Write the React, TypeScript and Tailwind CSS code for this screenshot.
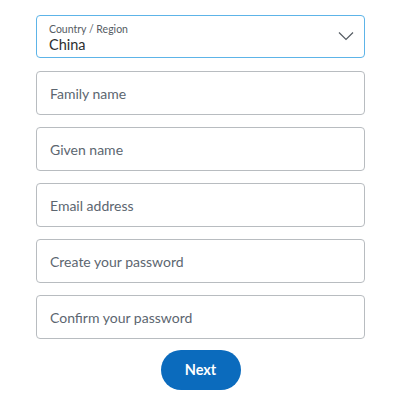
import React from "react";

const fields = [
  "Family name",
  "Given name",
  "Email address",
  "Create your password",
  "Confirm your password",
];

export default function App() {
  return (
    <div
      className="w-[406px] h-[400px] bg-white"
      style={{ fontFamily: "Lato, 'Noto Sans', sans-serif" }}
    >
      <div className="ml-[36px] w-[329px] pt-[15px] flex flex-col">
        {/* Country select */}
        <div className="relative h-[43px] rounded-[4px] border-[1.5px] border-[#5db4e8] px-[12px] pt-[6px]">
          <div className="text-[10.5px] leading-[14px] text-[#555c63]">
            Country / Region
          </div>
          <div className="text-[14.5px] leading-[18px] text-[#2c2e2f]">China</div>
          <svg
            className="absolute right-[10px] top-[15px]"
            width="16"
            height="10"
            viewBox="0 0 16 10"
            fill="none"
            stroke="#555c63"
            strokeWidth="1.2"
          >
            <path d="M1 1.5l7 7 7-7" />
          </svg>
        </div>

        <div className="mt-[13px] flex flex-col gap-[12px]">
          {fields.map((f) => (
            <div
              key={f}
              className="h-[44px] rounded-[4px] border border-[#b8bcc0] px-[13px] flex items-center text-[14px] text-[#5c6670]"
            >
              {f}
            </div>
          ))}
        </div>

        <div className="mt-[11px] flex justify-center">
          <button className="w-[80px] h-[40px] rounded-full bg-[#0b6bbd] text-white text-[14.5px] font-bold">
            Next
          </button>
        </div>
      </div>
    </div>
  );
}
